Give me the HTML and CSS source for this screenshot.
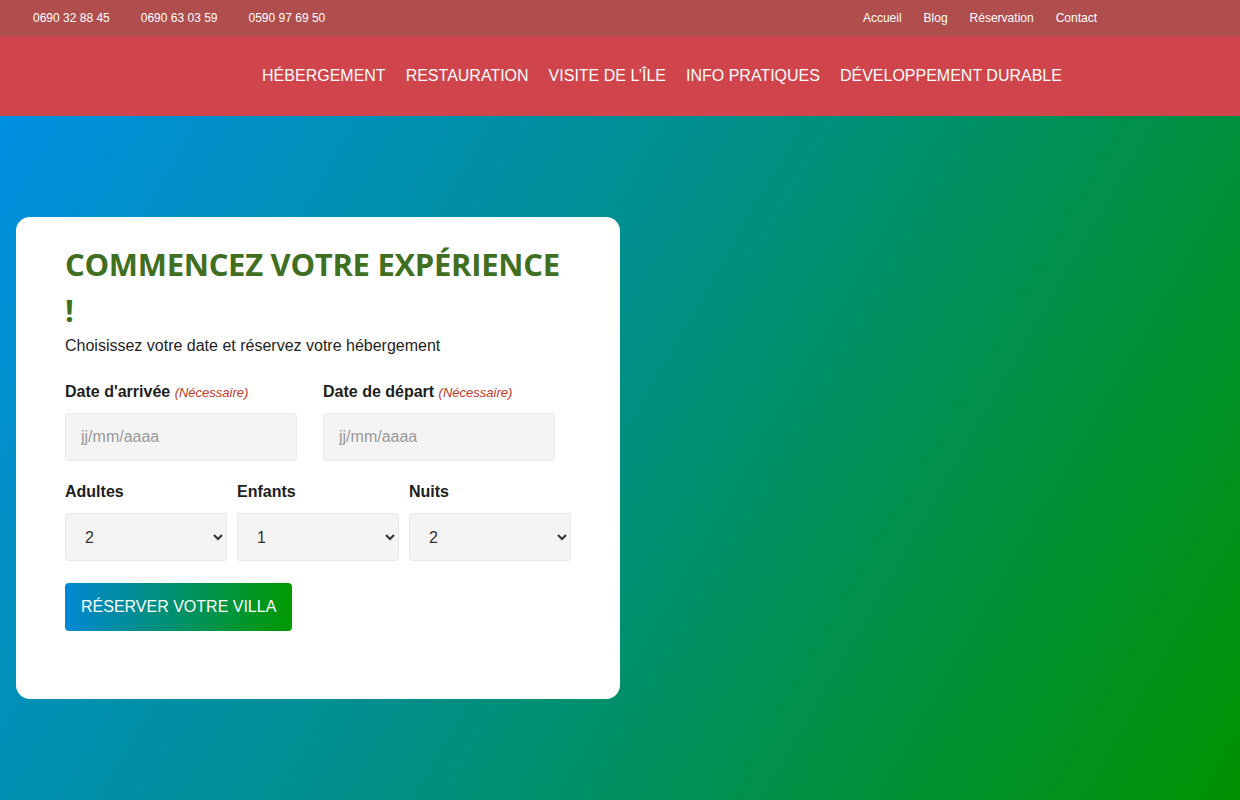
FILE: index.html
```html
<!DOCTYPE html>
<html lang="fr">

<head>
    <meta charset="UTF-8">
    <meta name="viewport" content="width=device-width, initial-scale=1.0">
    <title>Réservation</title>
    <link rel="stylesheet" href="styles.css">
</head>

<body>
    <header>
        <div class="topbar">
            <div class="phones">
                <span>0690 32 88 45</span>
                <span>0690 63 03 59</span>
                <span>0590 97 69 50</span>
            </div>
            <nav class="top-links">
                <a href="#">Accueil</a>
                <a href="#">Blog</a>
                <a href="#">Réservation</a>
                <a href="#">Contact</a>
            </nav>
        </div>
        <nav class="main-nav">
            <a href="#">Hébergement</a>
            <a href="#">Restauration</a>
            <a href="#">Visite de l’île</a>
            <a href="#">Info pratiques</a>
            <a href="#">Développement durable</a>
        </nav>
    </header>

    <section class="hero">
        <div class="booking-card">
            <h1>Commencez votre expérience !</h1>
            <p class="intro">Choisissez votre date et réservez votre hébergement</p>

            <form>
                <div class="row dates">
                    <div class="field">
                        <label>Date d'arrivée <span class="req">(Nécessaire)</span></label>
                        <input type="text" placeholder="jj/mm/aaaa">
                    </div>
                    <div class="field">
                        <label>Date de départ <span class="req">(Nécessaire)</span></label>
                        <input type="text" placeholder="jj/mm/aaaa">
                    </div>
                </div>

                <div class="row counts">
                    <div class="field">
                        <label>Adultes</label>
                        <select>
                            <option>1</option>
                            <option selected>2</option>
                            <option>3</option>
                        </select>
                    </div>
                    <div class="field">
                        <label>Enfants</label>
                        <select>
                            <option>0</option>
                            <option selected>1</option>
                            <option>2</option>
                        </select>
                    </div>
                    <div class="field">
                        <label>Nuits</label>
                        <select>
                            <option>1</option>
                            <option selected>2</option>
                            <option>3</option>
                        </select>
                    </div>
                </div>

                <button type="button" class="btn">Réserver votre villa</button>
            </form>
        </div>
    </section>
</body>

</html>
```

FILE: styles.css
```css
body {
    margin: 0;
    font-family: "Liberation Sans", Arial, sans-serif;
    color: #1e1e1e;
}

a {
    color: inherit;
    text-decoration: none;
}

.topbar {
    height: 36px;
    background-color: #b04e4e;
    color: #fff;
    font-size: 12px;
    display: flex;
    justify-content: space-between;
    align-items: center;
    padding-left: 33px;
    padding-right: 143px;
}

.phones {
    display: flex;
    gap: 31px;
}

.top-links {
    display: flex;
    gap: 22px;
}

.main-nav {
    height: 80px;
    background-color: #d0454b;
    display: flex;
    justify-content: center;
    align-items: center;
    gap: 20px;
    padding-left: 84px;
}

.main-nav a {
    color: #fff;
    font-size: 16px;
    text-transform: uppercase;
}

.hero {
    height: 684px;
    background: linear-gradient(120deg, #0090e2 0%, #008f8a 45%, #009200 100%);
    padding: 101px 16px 0;
    box-sizing: border-box;
}

.booking-card {
    width: 604px;
    height: 482px;
    box-sizing: border-box;
    background-color: #fff;
    border-radius: 14px;
    padding: 24px 49px 0;
}

h1 {
    margin: 0;
    max-width: 500px;
    color: #3f6f1f;
    font-family: "Open Sans", sans-serif;
    font-weight: 700;
    font-size: 31px;
    line-height: 46px;
    letter-spacing: -0.3px;
    text-transform: uppercase;
}

.intro {
    margin: 4px 0 28px;
    font-size: 16px;
}

.row {
    display: flex;
}

.dates {
    gap: 26px;
    margin-bottom: 22px;
}

.dates .field {
    width: 232px;
}

.counts {
    gap: 10px;
    margin-bottom: 22px;
}

.counts .field {
    width: 162px;
}

label {
    display: block;
    font-weight: 700;
    font-size: 16px;
    margin-bottom: 12px;
}

.req {
    font-weight: 400;
    font-style: italic;
    font-size: 13px;
    color: #c0392b;
}

input,
select {
    display: block;
    width: 100%;
    height: 48px;
    box-sizing: border-box;
    background-color: #f4f4f4;
    border: 1px solid #ebebeb;
    border-radius: 3px;
    font-family: "Liberation Sans", Arial, sans-serif;
    font-size: 16px;
    color: #333;
}

input {
    padding: 0 15px;
}

input::placeholder {
    color: #9a9a9a;
}

select {
    padding: 0 12px 0 15px;
}

.btn {
    height: 48px;
    padding: 0 16px;
    border: none;
    border-radius: 4px;
    background: linear-gradient(90deg, #0088d4, #009a00);
    color: #fff;
    font-family: "Liberation Sans", Arial, sans-serif;
    font-size: 16px;
    text-transform: uppercase;
}
```
